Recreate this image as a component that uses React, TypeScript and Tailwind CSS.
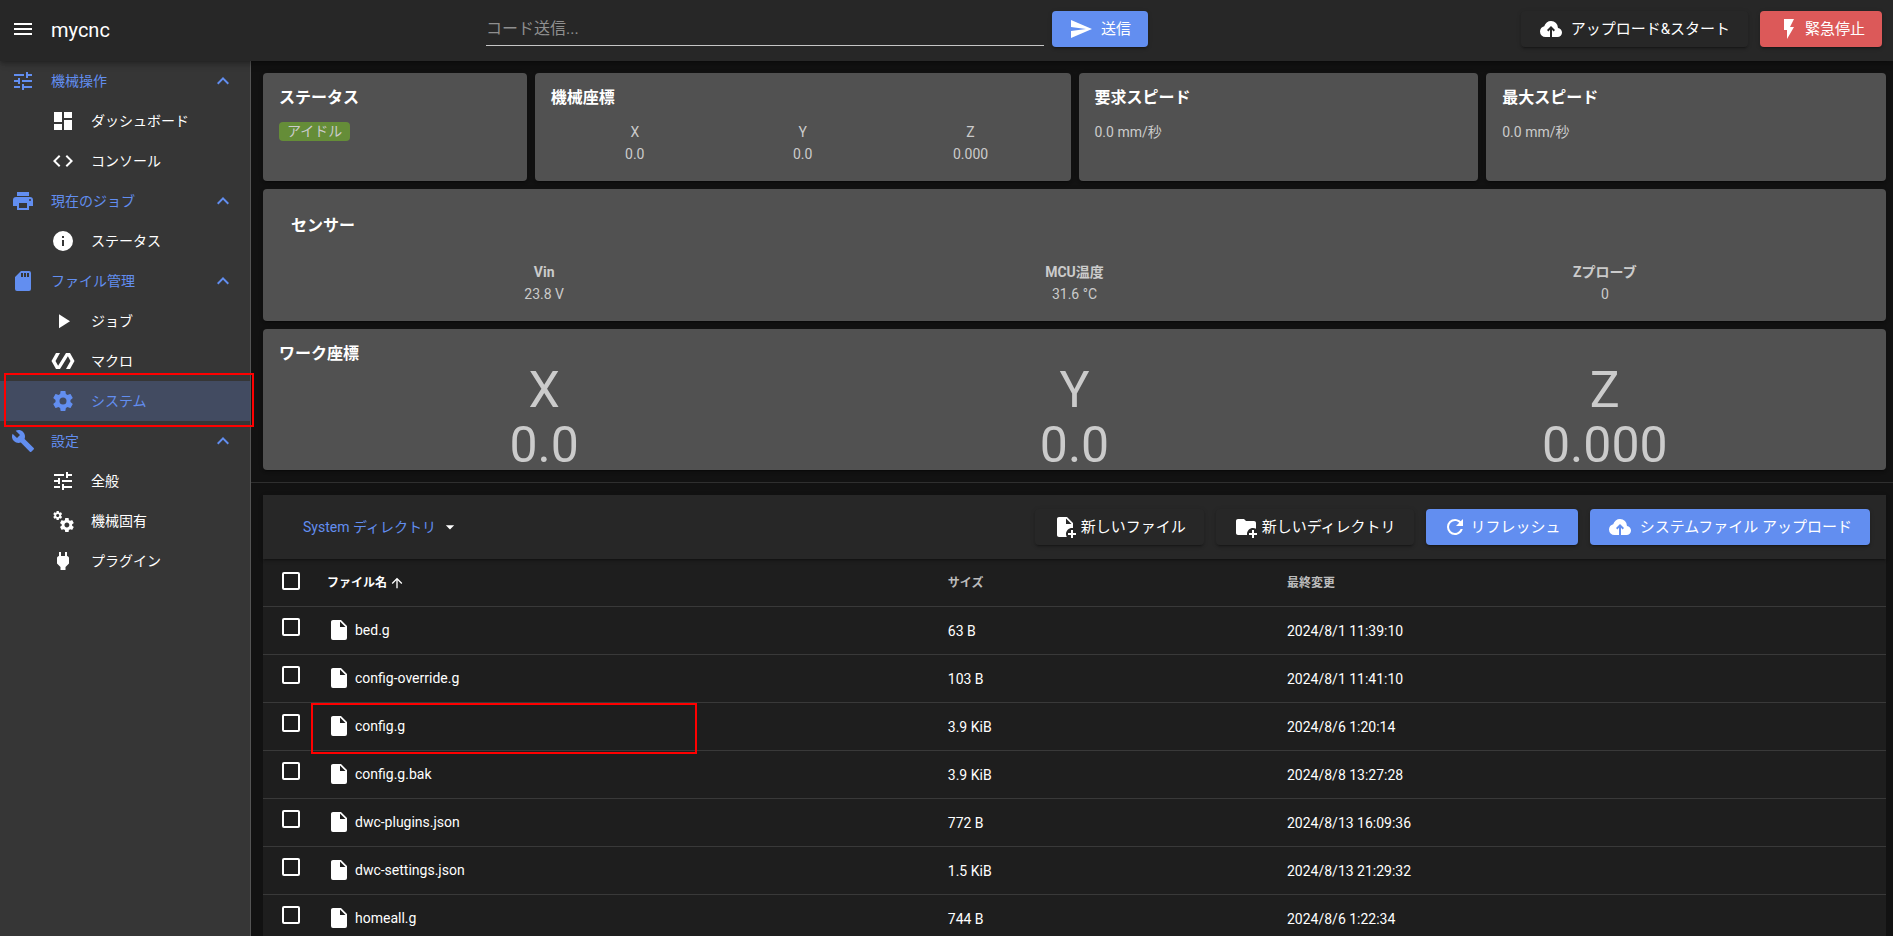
import { useState } from "react";
import clsx from "clsx";

const icons = {
  menu: "M3,6H21V8H3V6M3,11H21V13H3V11M3,16H21V18H3V16Z",
  tune: "M3,17V19H9V17H3M3,5V7H13V5H3M13,21V19H21V17H13V15H11V21H13M7,9V11H3V13H7V15H9V9H7M21,13V11H11V13H21M15,9H17V7H21V5H17V3H15V9Z",
  dashboard: "M13,3V9H21V3M13,21H21V11H13M3,21H11V15H3M3,13H11V3H3V13Z",
  code: "M14.6,16.6L19.2,12L14.6,7.4L16,6L22,12L16,18L14.6,16.6M9.4,16.6L4.8,12L9.4,7.4L8,6L2,12L8,18L9.4,16.6Z",
  printer:
    "M18,3H6V7H18M19,12A1,1 0 0,1 18,11A1,1 0 0,1 19,10A1,1 0 0,1 20,11A1,1 0 0,1 19,12M16,19H8V14H16M19,8H5A3,3 0 0,0 2,11V17H6V21H18V17H22V11A3,3 0 0,0 19,8Z",
  info: "M13,9H11V7H13M13,17H11V11H13M12,2A10,10 0 0,0 2,12A10,10 0 0,0 12,22A10,10 0 0,0 22,12A10,10 0 0,0 12,2Z",
  sd: "M18,8H16V4H18M15,8H13V4H15M12,8H10V4H12M18,2H10L4,8V20A2,2 0 0,0 6,22H18A2,2 0 0,0 20,20V4A2,2 0 0,0 18,2Z",
  play: "M8,5.14V19.14L19,12.14L8,5.14Z",
  polymer:
    "M19,4H15L7.1,16.63L4.5,12L9,4H5L0.5,12L5,20H9L16.89,7.37L19.5,12L15,20H19L23.5,12L19,4Z",
  cog: "M12,15.5A3.5,3.5 0 0,1 8.5,12A3.5,3.5 0 0,1 12,8.5A3.5,3.5 0 0,1 15.5,12A3.5,3.5 0 0,1 12,15.5M19.43,12.97C19.47,12.65 19.5,12.33 19.5,12C19.5,11.67 19.47,11.34 19.43,11L21.54,9.37C21.73,9.22 21.78,8.95 21.66,8.73L19.66,5.27C19.54,5.05 19.27,4.96 19.05,5.05L16.56,6.05C16.04,5.66 15.5,5.32 14.87,5.07L14.5,2.42C14.46,2.18 14.25,2 14,2H10C9.75,2 9.54,2.18 9.5,2.42L9.13,5.07C8.5,5.32 7.96,5.66 7.44,6.05L4.95,5.05C4.73,4.96 4.46,5.05 4.34,5.27L2.34,8.73C2.21,8.95 2.27,9.22 2.46,9.37L4.57,11C4.53,11.34 4.5,11.67 4.5,12C4.5,12.33 4.53,12.65 4.57,12.97L2.46,14.63C2.27,14.78 2.21,15.05 2.34,15.27L4.34,18.73C4.46,18.95 4.73,19.03 4.95,18.95L7.44,17.94C7.96,18.34 8.5,18.68 9.13,18.93L9.5,21.58C9.54,21.82 9.75,22 10,22H14C14.25,22 14.46,21.82 14.5,21.58L14.87,18.93C15.5,18.67 16.04,18.34 16.56,17.94L19.05,18.95C19.27,19.03 19.54,18.95 19.66,18.73L21.66,15.27C21.78,15.05 21.73,14.78 21.54,14.63L19.43,12.97Z",
  wrench:
    "M22.7,19L13.6,9.9C14.5,7.6 14,4.9 12.1,3C10.1,1 7.1,0.6 4.7,1.7L9,6L6,9L1.6,4.7C0.4,7.1 0.9,10.1 2.9,12.1C4.8,14 7.5,14.5 9.8,13.6L18.9,22.7C19.3,23.1 19.9,23.1 20.3,22.7L22.6,20.4C23.1,20 23.1,19.3 22.7,19Z",
  cogs: "M15.9,18.45C17.25,18.45 18.35,17.35 18.35,16C18.35,14.65 17.25,13.55 15.9,13.55C14.54,13.55 13.45,14.65 13.45,16C13.45,17.35 14.54,18.45 15.9,18.45M21.1,16.68L22.58,17.84C22.71,17.95 22.75,18.13 22.66,18.29L21.26,20.71C21.17,20.86 21,20.92 20.83,20.86L19.09,20.16C18.73,20.44 18.33,20.67 17.91,20.85L17.64,22.7C17.62,22.87 17.47,23 17.3,23H14.5C14.32,23 14.18,22.87 14.15,22.7L13.89,20.85C13.46,20.67 13.07,20.44 12.71,20.16L10.96,20.86C10.81,20.92 10.62,20.86 10.54,20.71L9.14,18.29C9.05,18.13 9.09,17.95 9.22,17.84L10.7,16.68L10.65,16L10.7,15.31L9.22,14.16C9.09,14.05 9.05,13.86 9.14,13.71L10.54,11.29C10.62,11.13 10.81,11.07 10.96,11.13L12.71,11.84C13.07,11.56 13.46,11.32 13.89,11.15L14.15,9.29C14.18,9.13 14.32,9 14.5,9H17.3C17.47,9 17.62,9.13 17.64,9.29L17.91,11.15C18.33,11.32 18.73,11.56 19.09,11.84L20.83,11.13C21,11.07 21.17,11.13 21.26,11.29L22.66,13.71C22.75,13.86 22.71,14.05 22.58,14.16L21.1,15.31L21.15,16L21.1,16.68M6.69,8.07C7.56,8.07 8.26,7.37 8.26,6.5C8.26,5.63 7.56,4.92 6.69,4.92A1.58,1.58 0 0,0 5.11,6.5C5.11,7.37 5.82,8.07 6.69,8.07M10.03,6.94L11,7.68C11.07,7.75 11.09,7.87 11.03,7.97L10.13,9.53C10.08,9.63 9.96,9.67 9.86,9.63L8.74,9.18L8,9.62L7.81,10.81C7.79,10.92 7.7,11 7.59,11H5.79C5.67,11 5.58,10.92 5.56,10.81L5.4,9.62L4.64,9.18L3.52,9.63C3.41,9.67 3.3,9.63 3.24,9.53L2.34,7.97C2.28,7.87 2.31,7.75 2.39,7.68L3.34,6.94L3.31,6.5L3.34,6.06L2.39,5.32C2.31,5.25 2.28,5.13 2.34,5.03L3.24,3.47C3.3,3.37 3.41,3.33 3.52,3.37L4.63,3.82L5.4,3.38L5.56,2.19C5.58,2.08 5.67,2 5.79,2H7.59C7.7,2 7.79,2.08 7.81,2.19L8,3.38L8.74,3.82L9.86,3.37C9.96,3.33 10.08,3.37 10.13,3.47L11.03,5.03C11.09,5.13 11.07,5.25 11,5.32L10.03,6.06L10.06,6.5L10.03,6.94Z",
  plug: "M16,7V3H14V7H10V3H8V7H8C7,7 6,8 6,9V14.5L9.5,18V21H14.5V18L18,14.5V9C18,8 17,7 16,7Z",
  send: "M2,21L23,12L2,3V10L17,12L2,14V21Z",
  cloudUpload:
    "M11 20H6.5q-2.28 0-3.89-1.57Q1 16.85 1 14.58q0-1.95 1.17-3.48 1.18-1.53 3.08-1.95.63-2.3 2.5-3.72Q9.63 4 12 4q2.93 0 4.96 2.04Q19 8.07 19 11q1.73.2 2.86 1.5 1.14 1.28 1.14 3 0 1.88-1.31 3.19T18.5 20H13v-7.15l1.6 1.55L16 13l-4-4-4 4 1.4 1.4 1.6-1.55Z",
  flash: "M7,2V13H10V22L17,10H13L17,2H7Z",
  filePlus:
    "M14 2H6C4.89 2 4 2.89 4 4V20C4 21.11 4.89 22 6 22H13.81C13.28 21.09 13 20.05 13 19C13 15.69 15.69 13 19 13C19.34 13 19.67 13.03 20 13.08V8L14 2M13 9V3.5L18.5 9H13M23 20H20V23H18V20H15V18H18V15H20V18H23V20Z",
  folderPlus:
    "M13 19C13 19.34 13.04 19.67 13.09 20H4C2.9 20 2 19.11 2 18V6C2 4.89 2.89 4 4 4H10L12 6H20C21.1 6 22 6.89 22 8V13.81C21.12 13.3 20.1 13 19 13C15.69 13 13 15.69 13 19M20 18V15H18V18H15V20H18V23H20V20H23V18H20Z",
  refresh:
    "M17.65,6.35C16.2,4.9 14.21,4 12,4A8,8 0 0,0 4,12A8,8 0 0,0 12,20C15.73,20 18.84,17.45 19.73,14H17.65C16.83,16.33 14.61,18 12,18A6,6 0 0,1 6,12A6,6 0 0,1 12,6C13.66,6 15.14,6.69 16.22,7.78L13,11H20V4L17.65,6.35Z",
  file: "M13,9V3.5L18.5,9M6,2C4.89,2 4,2.89 4,4V20A2,2 0 0,0 6,22H18A2,2 0 0,0 20,20V8L14,2H6Z",
  chevronUp: "M7.41,15.41L12,10.83L16.59,15.41L18,14L12,8L6,14L7.41,15.41Z",
  menuDown: "M7,10L12,15L17,10H7Z",
  arrowUp:
    "M13,20H11V8L5.5,13.5L4.08,12.08L12,4.16L19.92,12.08L18.5,13.5L13,8V20Z",
};

type IconName = keyof typeof icons;

function Icon({ name, className }: { name: IconName; className?: string }) {
  return (
    <svg
      viewBox="0 0 24 24"
      aria-hidden="true"
      className={clsx("shrink-0 fill-current", className ?? "size-6")}
    >
      <path d={icons[name]} />
    </svg>
  );
}

const shadow =
  "shadow-[0_3px_1px_-2px_rgba(0,0,0,.2),0_2px_2px_0_rgba(0,0,0,.14),0_1px_5px_0_rgba(0,0,0,.12)]";

const variants = {
  primary: "bg-[#628ef0]",
  danger: "bg-[#dc5959]",
  plain: "bg-[#272727]",
};

function Button({
  icon,
  label,
  variant = "plain",
  tight = false,
  compact = false,
}: {
  icon: IconName;
  label: string;
  variant?: keyof typeof variants;
  tight?: boolean;
  compact?: boolean;
}) {
  return (
    <button
      type="button"
      className={clsx(
        "flex h-9 shrink-0 items-center rounded text-[15px] whitespace-nowrap text-white",
        tight ? "gap-1" : "gap-2",
        compact ? "px-[17px]" : "px-[18px]",
        shadow,
        variants[variant],
      )}
    >
      <Icon name={icon} />
      {label}
    </button>
  );
}

type NavItem = { icon: IconName; label: string; active?: boolean };
type NavGroup = NavItem & { items: NavItem[] };

const nav: NavGroup[] = [
  {
    icon: "tune",
    label: "機械操作",
    items: [
      { icon: "dashboard", label: "ダッシュボード" },
      { icon: "code", label: "コンソール" },
    ],
  },
  {
    icon: "printer",
    label: "現在のジョブ",
    items: [{ icon: "info", label: "ステータス" }],
  },
  {
    icon: "sd",
    label: "ファイル管理",
    items: [
      { icon: "play", label: "ジョブ" },
      { icon: "polymer", label: "マクロ" },
      { icon: "cog", label: "システム", active: true },
    ],
  },
  {
    icon: "wrench",
    label: "設定",
    items: [
      { icon: "tune", label: "全般" },
      { icon: "cogs", label: "機械固有" },
      { icon: "plug", label: "プラグイン" },
    ],
  },
];

function Sidebar() {
  return (
    <nav className="relative z-10 w-[251px] shrink-0 border-r border-[#545454] bg-[#363636] text-sm">
      {nav.map((group) => (
        <section key={group.label}>
          <button
            type="button"
            aria-expanded="true"
            className="flex h-10 w-full items-center gap-4 pr-[15px] pl-[11px] text-[#628ef0]"
          >
            <Icon name={group.icon} />
            <span className="flex-1 text-left">{group.label}</span>
            <Icon name="chevronUp" />
          </button>
          <ul>
            {group.items.map((item) => (
              <li key={item.label} className="relative">
                <a
                  href="#"
                  className={clsx(
                    "flex h-10 items-center gap-4 pl-[51px]",
                    item.active ? "bg-[#424b61] text-[#628ef0]" : "text-white",
                  )}
                >
                  <Icon name={item.icon} />
                  {item.label}
                </a>
                {item.active && (
                  <span className="pointer-events-none absolute -top-2 -right-1 -bottom-1.5 left-1 border-2 border-[#ff0000]" />
                )}
              </li>
            ))}
          </ul>
        </section>
      ))}
    </nav>
  );
}

function Header() {
  return (
    <header className="relative z-20 flex h-[61px] shrink-0 items-start bg-[#272727] pt-[11px] pr-[11px] pl-[11px] shadow-[0_2px_4px_-1px_rgba(0,0,0,.2),0_4px_5px_0_rgba(0,0,0,.14),0_1px_10px_0_rgba(0,0,0,.12)]">
      <div className="flex h-9 w-[475px] shrink-0 items-center gap-4">
        <button type="button" aria-label="メニュー">
          <Icon name="menu" />
        </button>
        <h1 className="pt-0.5 text-xl">mycnc</h1>
      </div>
      <form className="flex w-[662px] gap-2" onSubmit={(e) => e.preventDefault()}>
        <input
          type="text"
          aria-label="コード送信"
          placeholder="コード送信..."
          className="h-[35px] min-w-0 flex-1 border-b border-[#c6c6c6] bg-transparent text-base outline-none placeholder:text-[#8f8f8f]"
        />
        <Button icon="send" label="送信" variant="primary" compact />
      </form>
      <div className="ml-auto flex gap-3">
        <Button icon="cloudUpload" label="アップロード&スタート" />
        <Button icon="flash" label="緊急停止" variant="danger" tight compact />
      </div>
    </header>
  );
}

const card = clsx("rounded bg-[#515151] px-4 text-[#cbcbcb]", shadow);

function CardTitle({ children }: { children: string }) {
  return (
    <h2 className="text-base leading-[26px] font-bold text-white">{children}</h2>
  );
}

function Reading({
  label,
  value,
  bold,
}: {
  label: string;
  value: string;
  bold?: boolean;
}) {
  return (
    <div>
      <dt className={bold ? "font-bold" : undefined}>{label}</dt>
      <dd>{value}</dd>
    </div>
  );
}

function StatusPanel() {
  return (
    <div className="grid grid-cols-12 gap-2 text-sm leading-[22px]">
      <section className={clsx(card, "col-span-2 h-[108px] pt-3")}>
        <CardTitle>ステータス</CardTitle>
        <span className="mt-[11px] inline-block rounded bg-[#658d38] px-2 leading-[19px]">
          アイドル
        </span>
      </section>
      <section className={clsx(card, "col-span-4 pt-3")}>
        <CardTitle>機械座標</CardTitle>
        <dl className="mt-2.5 grid grid-cols-3 text-center">
          <Reading label="X" value="0.0" />
          <Reading label="Y" value="0.0" />
          <Reading label="Z" value="0.000" />
        </dl>
      </section>
      <section className={clsx(card, "col-span-3 pt-3")}>
        <CardTitle>要求スピード</CardTitle>
        <p className="mt-2.5">0.0 mm/秒</p>
      </section>
      <section className={clsx(card, "col-span-3 pt-3")}>
        <CardTitle>最大スピード</CardTitle>
        <p className="mt-2.5">0.0 mm/秒</p>
      </section>
      <section className={clsx(card, "col-span-12 h-[132px] pt-6")}>
        <div className="pl-3">
          <CardTitle>センサー</CardTitle>
        </div>
        <dl className="mt-[22px] grid grid-cols-3 text-center">
          <Reading label="Vin" value="23.8 V" bold />
          <Reading label="MCU温度" value="31.6 °C" bold />
          <Reading label="Zプローブ" value="0" bold />
        </dl>
      </section>
      <section className={clsx(card, "col-span-12 h-[141px] pt-3")}>
        <CardTitle>ワーク座標</CardTitle>
        <dl className="-mt-1 grid grid-cols-3 text-center text-[50px] leading-[55px]">
          <Reading label="X" value="0.0" />
          <Reading label="Y" value="0.0" />
          <Reading label="Z" value="0.000" />
        </dl>
      </section>
    </div>
  );
}

const files = [
  { name: "bed.g", size: "63 B", modified: "2024/8/1 11:39:10" },
  { name: "config-override.g", size: "103 B", modified: "2024/8/1 11:41:10" },
  { name: "config.g", size: "3.9 KiB", modified: "2024/8/6 1:20:14", marked: true },
  { name: "config.g.bak", size: "3.9 KiB", modified: "2024/8/8 13:27:28" },
  { name: "dwc-plugins.json", size: "772 B", modified: "2024/8/13 16:09:36" },
  { name: "dwc-settings.json", size: "1.5 KiB", modified: "2024/8/13 21:29:32" },
  { name: "homeall.g", size: "744 B", modified: "2024/8/6 1:22:34" },
];

function Checkbox({
  label,
  checked,
  onChange,
}: {
  label: string;
  checked: boolean;
  onChange: () => void;
}) {
  return (
    <input
      type="checkbox"
      aria-label={label}
      checked={checked}
      onChange={onChange}
      className="block size-[18px] appearance-none rounded-xs border-2 border-white checked:bg-[#628ef0]"
    />
  );
}

function FileTable() {
  const [selected, setSelected] = useState<string[]>([]);
  const all = selected.length === files.length;
  const toggle = (name: string) =>
    setSelected((s) =>
      s.includes(name) ? s.filter((n) => n !== name) : [...s, name],
    );

  return (
    <table className="w-full table-fixed border-separate border-spacing-0 bg-[#1e1e1e] text-left text-sm">
      <colgroup>
        <col className="w-12" />
        <col className="w-[38.25%]" />
        <col className="w-[20.9%]" />
        <col />
      </colgroup>
      <thead>
        <tr className="h-12 text-xs text-[#bcbcbc] *:border-b *:border-[#393939]">
          <th className="pb-1 pl-[19px]">
            <Checkbox
              label="すべて選択"
              checked={all}
              onChange={() => setSelected(all ? [] : files.map((f) => f.name))}
            />
          </th>
          <th className="px-4 text-white">
            <button type="button" className="flex items-center gap-0.5 font-bold">
              ファイル名
              <Icon name="arrowUp" className="size-4" />
            </button>
          </th>
          <th className="px-4">サイズ</th>
          <th className="px-4">最終変更</th>
        </tr>
      </thead>
      <tbody>
        {files.map((file) => (
          <tr key={file.name} className="h-12 *:border-b *:border-[#393939]">
            <td className="pb-2 pl-[19px]">
              <Checkbox
                label={file.name}
                checked={selected.includes(file.name)}
                onChange={() => toggle(file.name)}
              />
            </td>
            <td className="relative px-4 pb-0.5">
              <div className="flex items-center gap-1">
                <Icon name="file" />
                {file.name}
              </div>
              {file.marked && (
                <span className="pointer-events-none absolute top-0 -bottom-1 left-0 w-[386px] border-2 border-[#ff0000]" />
              )}
            </td>
            <td className="px-4">{file.size}</td>
            <td className="px-4">{file.modified}</td>
          </tr>
        ))}
      </tbody>
    </table>
  );
}

export default function App() {
  return (
    <div className="flex h-screen flex-col overflow-hidden bg-[#121212] font-['Roboto','Noto_Sans_CJK_JP',sans-serif] text-white">
      <Header />
      <div className="flex flex-1">
        <Sidebar />
        <main className="min-w-0 flex-1">
          <div className="pt-3 pr-[7px] pb-3 pl-3">
            <StatusPanel />
          </div>
          <hr className="border-[#2f2f2f]" />
          <section className="pt-3 pr-[7px] pl-3">
            <div
              className={clsx(
                "relative flex h-16 items-center gap-3 bg-[#272727] pr-4 pl-10",
                shadow,
              )}
            >
              <button
                type="button"
                className="mr-auto flex items-center gap-1 text-sm text-[#628ef0]"
              >
                System ディレクトリ
                <Icon name="menuDown" className="size-5 text-white" />
              </button>
              <Button icon="filePlus" label="新しいファイル" tight />
              <Button icon="folderPlus" label="新しいディレクトリ" tight />
              <Button icon="refresh" label="リフレッシュ" variant="primary" tight compact />
              <Button
                icon="cloudUpload"
                label="システムファイル アップロード"
                variant="primary"
              />
            </div>
            <FileTable />
          </section>
        </main>
      </div>
    </div>
  );
}
